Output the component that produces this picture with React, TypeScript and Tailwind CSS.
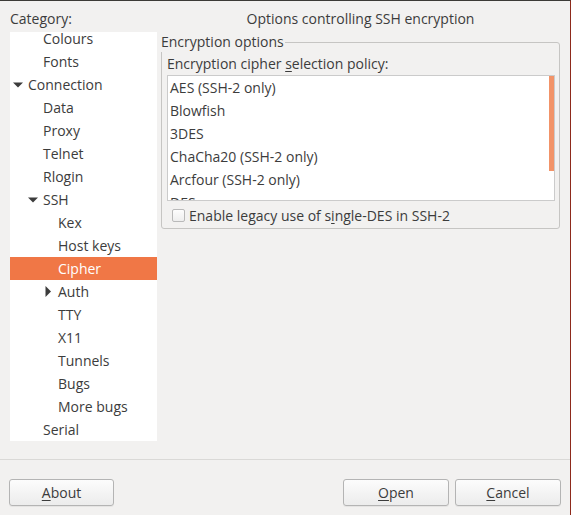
import React from 'react';

type Node = { label: string; level: number; expander?: 'down' | 'right'; selected?: boolean };

const tree: Node[] = [
  { label: 'Colours', level: 1 },
  { label: 'Fonts', level: 1 },
  { label: 'Connection', level: 0, expander: 'down' },
  { label: 'Data', level: 1 },
  { label: 'Proxy', level: 1 },
  { label: 'Telnet', level: 1 },
  { label: 'Rlogin', level: 1 },
  { label: 'SSH', level: 1, expander: 'down' },
  { label: 'Kex', level: 2 },
  { label: 'Host keys', level: 2 },
  { label: 'Cipher', level: 2, selected: true },
  { label: 'Auth', level: 2, expander: 'right' },
  { label: 'TTY', level: 2 },
  { label: 'X11', level: 2 },
  { label: 'Tunnels', level: 2 },
  { label: 'Bugs', level: 2 },
  { label: 'More bugs', level: 2 },
  { label: 'Serial', level: 1 },
];

const indent = ['pl-0', 'pl-[15px]', 'pl-[30px]'];

const ciphers = ['AES (SSH-2 only)', 'Blowfish', '3DES', 'ChaCha20 (SSH-2 only)', 'Arcfour (SSH-2 only)', 'DES'];

function Expander({ kind }: { kind?: 'down' | 'right' }) {
  return (
    <span className="w-[18px] h-full flex items-center justify-center pr-[2px]">
      {kind === 'down' && (
        <svg width="10" height="6" viewBox="0 0 10 6">
          <polygon points="0,0.5 10,0.5 5,5.5" fill="#3c3c3c" />
        </svg>
      )}
      {kind === 'right' && (
        <svg width="6" height="11" viewBox="0 0 6 11">
          <polygon points="0.5,0 6,5.5 0.5,11" fill="#3c3c3c" />
        </svg>
      )}
    </span>
  );
}

function Button({ children, narrow }: { children: React.ReactNode; narrow?: boolean }) {
  return (
    <button
      className={`${narrow ? 'w-[105px]' : 'w-[106px]'} h-[27px] rounded-[3px] border border-[#b4b4b4] bg-gradient-to-b from-[#fcfcfc] to-[#ececec] shadow-[0_1px_0_rgba(0,0,0,0.05)] text-[14px] text-[#3c3c3c] leading-none`}
    >
      {children}
    </button>
  );
}

export default function App() {
  return (
    <div className="w-[571px] h-[515px] bg-[#f2f1f0] border-t border-t-[#3c3b37] border-r border-r-[#8e2a1b] flex flex-col font-['Open_Sans','DejaVu_Sans',sans-serif] text-[14px] text-[#3c3c3c] overflow-hidden">
      <div className="flex h-[440px]">
        {/* category tree */}
        <div className="w-[147px] ml-[10px] flex flex-col">
          <div className="h-[31px] pt-[8px] leading-[20px]">
            Cate<u className="underline-offset-2">g</u>ory:
          </div>
          <div className="h-[409px] bg-white overflow-hidden">
            <div className="-mt-[5px]">
              {tree.map((n) => (
                <div
                  key={n.label}
                  className={`h-[23px] flex items-center ${indent[n.level]} ${n.selected ? 'bg-[#f07746] text-white' : ''}`}
                >
                  <Expander kind={n.expander} />
                  <span className="leading-[23px]">{n.label}</span>
                </div>
              ))}
            </div>
          </div>
        </div>

        {/* options panel */}
        <div className="w-[399px] ml-[4px] flex flex-col">
          <div className="h-[31px] pt-[8px] leading-[20px] text-center">Options controlling SSH encryption</div>
          <fieldset className="border border-[#c6c5c3] rounded-[3px] pl-[5px] pr-[4px] pb-[1px]">
            <legend className="leading-[20px] -ml-[6px] pr-[1px]">Encryption options</legend>
            <div className="h-[23px] leading-[23px]">
              Encryption cipher <u className="underline-offset-2">s</u>election policy:
            </div>
            <div className="h-[126px] border border-[#cbcbcb] bg-white flex overflow-hidden">
              <div className="flex-1 pl-[2px]">
                {ciphers.map((c) => (
                  <div key={c} className="h-[23px] leading-[23px]">
                    {c}
                  </div>
                ))}
              </div>
              <div className="w-[5px]">
                <div className="h-[95px] bg-[#f29368]" />
              </div>
            </div>
            <div className="h-[23px] mt-[3px] flex items-center pl-[5px]">
              <span className="w-[13px] h-[13px] rounded-[2px] border border-[#b9b9b9] bg-gradient-to-b from-[#fdfdfd] to-[#eeeeee] mr-[4px]" />
              <span className="leading-[23px]">
                Enable legacy use of s<u className="underline-offset-2">i</u>ngle-DES in SSH-2
              </span>
            </div>
          </fieldset>
        </div>
      </div>

      <div className="mt-[18px] h-px bg-[#dad9d7]" />

      <div className="mt-[19px] flex justify-between pl-[9px] pr-[9px]">
        <Button narrow>
          <u className="underline-offset-2">A</u>bout
        </Button>
        <div className="flex gap-[6px]">
          <Button>
            <u className="underline-offset-2">O</u>pen
          </Button>
          <Button>
            <u className="underline-offset-2">C</u>ancel
          </Button>
        </div>
      </div>
    </div>
  );
}
